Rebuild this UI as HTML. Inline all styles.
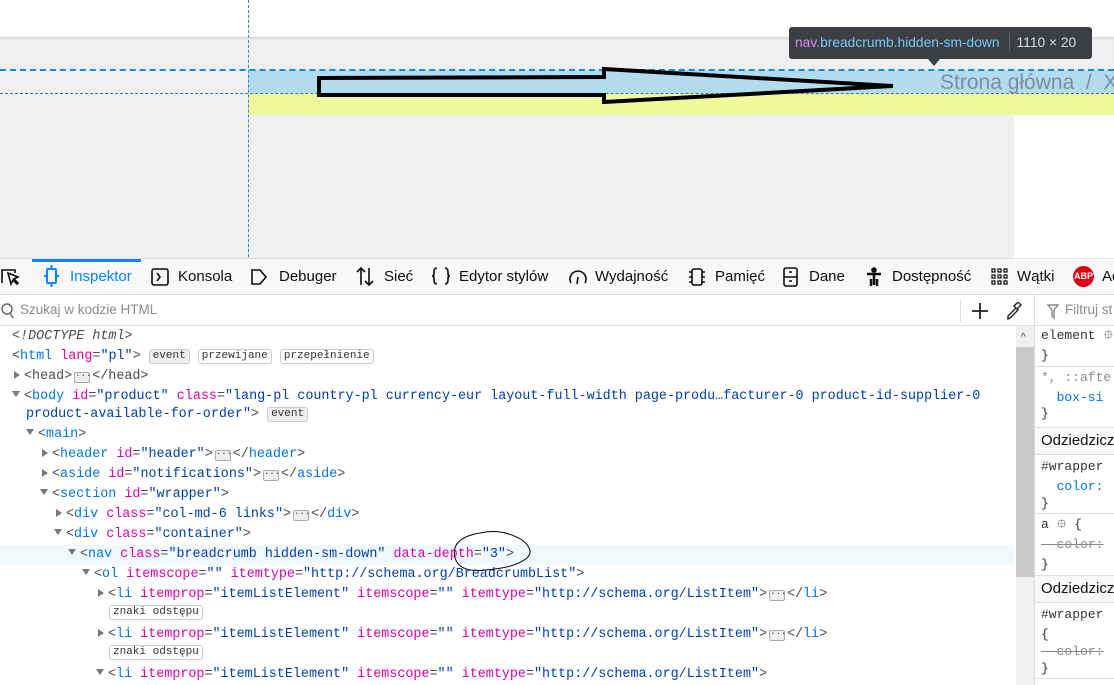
<!DOCTYPE html>
<html><head><meta charset="utf-8"><style>
*{margin:0;padding:0;box-sizing:border-box}
body{width:1114px;height:685px;overflow:hidden;background:#fff;font-family:"Liberation Sans",sans-serif;position:relative}
.abs{position:absolute}
.code div{position:absolute;height:20px;line-height:20px;white-space:pre;font-family:"Liberation Mono",monospace;font-size:13.4px;color:#4a4a4f}
.t{color:#0074e8}.a{color:#dd00a9}.v{color:#003eaa}.p{color:#4a4a4f}.g{color:#8a8a8a}
.badge{display:inline-block;font-size:11px;line-height:13px;padding:0 3px;border:1px solid #ccc;border-radius:3px;background:#fff;color:#333;vertical-align:1px}
.badge.e{background:#eee}
.dots{display:inline-block;width:16px;height:11px;border:1px solid #aaa;border-radius:2px;background:#eee;font-size:9px;line-height:6px;text-align:center;vertical-align:1px;color:#333;margin:0 2px}
.tri{display:inline-block;width:0;height:0}
.tr{border-left:6px solid #777;border-top:4px solid transparent;border-bottom:4px solid transparent;margin-right:4px}
.td{border-top:6px solid #777;border-left:4px solid transparent;border-right:4px solid transparent;margin-right:4px;vertical-align:2px}
.tab{position:absolute;top:267px;font-size:15px;color:#0c0c0d;line-height:20px;white-space:nowrap}
.side div{position:absolute;left:1041px;font-family:"Liberation Mono",monospace;font-size:13px;line-height:20px;white-space:pre;color:#333}
</style></head><body>
<div class="abs" style="left:0;top:37px;width:1114px;height:221px;background:#f0f0f0;box-shadow:inset 0 3px 3px -2px #ccc"></div>
<div class="abs" style="left:1014px;top:115px;width:100px;height:143px;background:#fff"></div>
<div class="abs" style="left:248px;top:70px;width:866px;height:23px;background:#b3dbee"></div>
<div class="abs" style="left:248px;top:93px;width:866px;height:22px;background:#eff99a"></div>
<div class="abs" style="left:0;top:69px;width:1114px;border-top:2px dashed #1a8ad4"></div>
<div class="abs" style="left:0;top:93px;width:1114px;border-top:1px dashed #2a7ab0"></div>
<div class="abs" style="left:248px;top:0;height:257px;border-left:1px dashed #2a8ad0"></div>
<div class="abs" style="left:940px;top:70px;font-size:21px;color:#7d8ea0;line-height:26px;white-space:nowrap">Strona główna &nbsp;/ &nbsp;X</div>
<svg class="abs" style="left:0;top:0" width="1114" height="258">
<path d="M319 78 L604 77 L604 69 L893 86 L604 102 L604 95 L319 95 Z" fill="none" stroke="#000" stroke-width="4" stroke-linejoin="miter"/>
</svg>
<div class="abs" style="left:789px;top:27px;width:303px;height:32px;background:#3b3e43;border-radius:3px;font-size:13.8px;line-height:32px;white-space:nowrap;padding-left:6px;color:#ddd"><span style="color:#d88cf0">nav</span><span style="color:#79c7f5">.breadcrumb.hidden-sm-down</span><span style="display:inline-block;width:1px;height:18px;background:#666;vertical-align:-4px;margin:0 7px 0 9px"></span>1110 × 20</div>
<div class="abs" style="left:928px;top:59px;border-top:7px solid #3b3e43;border-left:6px solid transparent;border-right:6px solid transparent"></div>
<!-- toolbar -->
<div class="abs" style="left:0;top:258px;width:1114px;height:37px;background:#f9f9fa;border-top:1px solid #ddd;border-bottom:1px solid #ddd"></div>
<div class="abs" style="left:32px;top:259px;width:109px;height:3px;background:#0a84ff"></div>
<svg class="abs" style="left:0;top:265px" width="1114" height="24" fill="none" stroke="#0c0c0d" stroke-width="1.6">
<path d="M2 18V5h13v3M8 8l3 11 2-4 4 4 1-1-4-4 4-2z"/>
<rect x="47" y="4" width="9" height="14" rx="1" stroke="#0a84ff" stroke-width="2"/><path d="M51.5 0v4M51.5 18v4M47 11h-3M56 11h3" stroke="#0a84ff" stroke-width="2"/>
<rect x="152" y="4" width="16" height="16" rx="2"/><path d="M157 8l3 4-3 4"/>
<path d="M252 5h8l6 7-6 7h-8z"/>
<path d="M361 3v17M357 7l4-4 4 4M369 3v17M365 16l4 4 4-4"/>
<path d="M437 3q-3 0-3 4v2q0 2-2 2 2 0 2 2v2q0 4 3 4M445 3q3 0 3 4v2q0 2 2 2-2 0-2 2v2q0 4-3 4"/>
<path d="M571 18a8 8 0 1 1 14 0M578 12l-1 7"/>
<rect x="692" y="4" width="10" height="16" rx="2"/><path d="M689 7h3M689 12h3M689 17h3M702 7h3M702 12h3M702 17h3"/>
<rect x="784" y="3" width="13" height="18" rx="2"/><path d="M784 12h13M789 7h3M789 16h3"/>
<circle cx="874" cy="5" r="2" fill="#0c0c0d"/><path d="M867 9h14M874 9v11M871 21v-7M877 21v-7" stroke-width="2.5"/>
<path d="M992 4h3v3h-3zM998 4h3v3h-3zM1004 4h3v3h-3zM992 10h3v3h-3zM998 10h3v3h-3zM1004 10h3v3h-3zM992 16h3v3h-3zM998 16h3v3h-3zM1004 16h3v3h-3z" stroke-width="1.2"/>
</svg>
<div class="abs" style="left:1073px;top:266px;width:21px;height:21px;border-radius:50%;background:#d01;color:#fff;font-size:9px;font-weight:bold;line-height:21px;text-align:center">ABP</div>
<div class="tab" style="left:70px;color:#0a84ff">Inspektor</div>
<div class="tab" style="left:178px">Konsola</div>
<div class="tab" style="left:279px">Debuger</div>
<div class="tab" style="left:384px">Sieć</div>
<div class="tab" style="left:459px">Edytor stylów</div>
<div class="tab" style="left:595px">Wydajność</div>
<div class="tab" style="left:715px">Pamięć</div>
<div class="tab" style="left:809px">Dane</div>
<div class="tab" style="left:892px">Dostępność</div>
<div class="tab" style="left:1017px">Wątki</div>
<div class="tab" style="left:1102px">Ac</div>
<!-- search row -->
<div class="abs" style="left:0;top:295px;width:1114px;height:31px;background:#fff;border-bottom:1px solid #ddd"></div>
<svg class="abs" style="left:0;top:302px" width="1114" height="20" fill="none" stroke="#666" stroke-width="1.4">
<circle cx="7" cy="7" r="5"/><path d="M10 11l3 5"/>
<path d="M980 1v16M972 9h16" stroke="#222" stroke-width="1.8"/>
<path d="M1008 17l2-1 8-8-2-2-8 8zM1014 4l4-4 3 3-4 4z" stroke="#222"/>
<path d="M1048 3h10l-4 5v8l-2-2V8z" stroke="#888"/>
</svg>
<div class="abs" style="left:960px;top:300px;height:22px;border-left:1px solid #ddd"></div>
<div class="abs" style="left:1034px;top:295px;height:390px;border-left:1px solid #ddd"></div>
<div class="abs" style="left:20px;top:302px;font-size:13.5px;color:#8a8a8a">Szukaj w kodzie HTML</div>
<div class="abs" style="left:1065px;top:302px;font-size:13.5px;color:#8a8a8a;white-space:nowrap">Filtruj st</div>
<div class="abs" style="left:0;top:545px;width:1014px;height:20px;background:#f0f9fe"></div>
<div class="abs" style="left:1016px;top:326px;width:18px;height:359px;background:#f0f0f0"></div>
<div class="abs" style="left:1016px;top:347px;width:18px;height:230px;background:#c8c8c8"></div>
<div class="abs" style="left:1021px;top:332px;font-size:10px;color:#444">^</div>
<div class="code">
<div style="left:12px;top:327px;font-style:italic">&lt;!DOCTYPE html&gt;</div>
<div style="left:12px;top:347px"><span class="p">&lt;</span><span class="t">html</span> <span class="a">lang</span>=<span class="v">"pl"</span>&gt; <span class="badge e">event</span> <span class="badge">przewijane</span> <span class="badge">przepełnienie</span></div>
<div style="left:14px;top:367px" class="g"><span class="tri tr"></span>&lt;head&gt;<span class="dots">···</span>&lt;/head&gt;</div>
<div style="left:12px;top:387px"><span class="tri td"></span>&lt;<span class="t">body</span> <span class="a">id</span>=<span class="v">"product"</span> <span class="a">class</span>=<span class="v">"lang-pl country-pl currency-eur layout-full-width page-produ…facturer-0 product-id-supplier-0</span></div>
<div style="left:26px;top:405px"><span class="v">product-available-for-order"</span>&gt; <span class="badge e">event</span></div>
<div style="left:26px;top:425px"><span class="tri td"></span>&lt;<span class="t">main</span>&gt;</div>
<div style="left:42px;top:445px"><span class="tri tr"></span>&lt;<span class="t">header</span> <span class="a">id</span>=<span class="v">"header"</span>&gt;<span class="dots">···</span>&lt;/<span class="t">header</span>&gt;</div>
<div style="left:42px;top:465px"><span class="tri tr"></span>&lt;<span class="t">aside</span> <span class="a">id</span>=<span class="v">"notifications"</span>&gt;<span class="dots">···</span>&lt;/<span class="t">aside</span>&gt;</div>
<div style="left:40px;top:485px"><span class="tri td"></span>&lt;<span class="t">section</span> <span class="a">id</span>=<span class="v">"wrapper"</span>&gt;</div>
<div style="left:56px;top:505px"><span class="tri tr"></span>&lt;<span class="t">div</span> <span class="a">class</span>=<span class="v">"col-md-6 links"</span>&gt;<span class="dots">···</span>&lt;/<span class="t">div</span>&gt;</div>
<div style="left:54px;top:525px"><span class="tri td"></span>&lt;<span class="t">div</span> <span class="a">class</span>=<span class="v">"container"</span>&gt;</div>
<div style="left:68px;top:545px"><span class="tri td"></span>&lt;<span class="t">nav</span> <span class="a">class</span>=<span class="v">"breadcrumb hidden-sm-down"</span> <span class="a">data-depth</span>=<span class="v">"3"</span>&gt;</div>
<div style="left:82px;top:565px"><span class="tri td"></span>&lt;<span class="t">ol</span> <span class="a">itemscope</span>=<span class="v">""</span> <span class="a">itemtype</span>=<span class="v">"http://schema.org/BreadcrumbList"</span>&gt;</div>
<div style="left:98px;top:585px"><span class="tri tr"></span>&lt;<span class="t">li</span> <span class="a">itemprop</span>=<span class="v">"itemListElement"</span> <span class="a">itemscope</span>=<span class="v">""</span> <span class="a">itemtype</span>=<span class="v">"http://schema.org/ListItem"</span>&gt;<span class="dots">···</span>&lt;/<span class="t">li</span>&gt;</div>
<div style="left:109px;top:603px"><span class="badge">znaki odstępu</span></div>
<div style="left:98px;top:625px"><span class="tri tr"></span>&lt;<span class="t">li</span> <span class="a">itemprop</span>=<span class="v">"itemListElement"</span> <span class="a">itemscope</span>=<span class="v">""</span> <span class="a">itemtype</span>=<span class="v">"http://schema.org/ListItem"</span>&gt;<span class="dots">···</span>&lt;/<span class="t">li</span>&gt;</div>
<div style="left:109px;top:643px"><span class="badge">znaki odstępu</span></div>
<div style="left:96px;top:665px"><span class="tri td"></span>&lt;<span class="t">li</span> <span class="a">itemprop</span>=<span class="v">"itemListElement"</span> <span class="a">itemscope</span>=<span class="v">""</span> <span class="a">itemtype</span>=<span class="v">"http://schema.org/ListItem"</span>&gt;</div>
</div>
<svg class="abs" style="left:440px;top:528px" width="100" height="50" fill="none" stroke="#000" stroke-width="1"><path d="M40 5q-30 5-25 25 5 15 30 12 30-2 42-12 8-8-5-18-20-12-42-7"/></svg>
<div class="abs" style="left:1035px;top:427px;width:79px;height:28px;background:#f9f9fa;border-top:1px solid #ddd;border-bottom:1px solid #ddd"></div>
<div class="abs" style="left:1035px;top:575px;width:79px;height:28px;background:#f9f9fa;border-top:1px solid #ddd;border-bottom:1px solid #ddd"></div>
<div class="abs" style="left:1035px;top:366px;width:79px;border-top:1px solid #ddd"></div>
<div class="abs" style="left:1035px;top:513px;width:79px;border-top:1px solid #ddd"></div>
<div class="abs" style="left:1035px;top:678px;width:79px;border-top:1px solid #ddd"></div>
<div class="side">
<div style="top:326px">element ⯐</div>
<div style="top:346px">}</div>
<div style="top:368px;color:#888">*, ::afte</div>
<div style="top:388px;color:#0074e8">  box-si</div>
<div style="top:404px">}</div>
<div style="top:431px;font-family:'Liberation Sans',sans-serif;font-size:15px;color:#111">Odziedzicz</div>
<div style="top:457px">#wrapper</div>
<div style="top:477px;color:#0074e8">  color:</div>
<div style="top:494px">}</div>
<div style="top:515px">a ⯐ {</div>
<div style="top:535px;color:#888;text-decoration:line-through">  color:</div>
<div style="top:555px">}</div>
<div style="top:579px;font-family:'Liberation Sans',sans-serif;font-size:15px;color:#111">Odziedzicz</div>
<div style="top:605px">#wrapper</div>
<div style="top:625px">{</div>
<div style="top:642px;color:#888;text-decoration:line-through">  color:</div>
<div style="top:659px">}</div>
</div>
</body></html>
